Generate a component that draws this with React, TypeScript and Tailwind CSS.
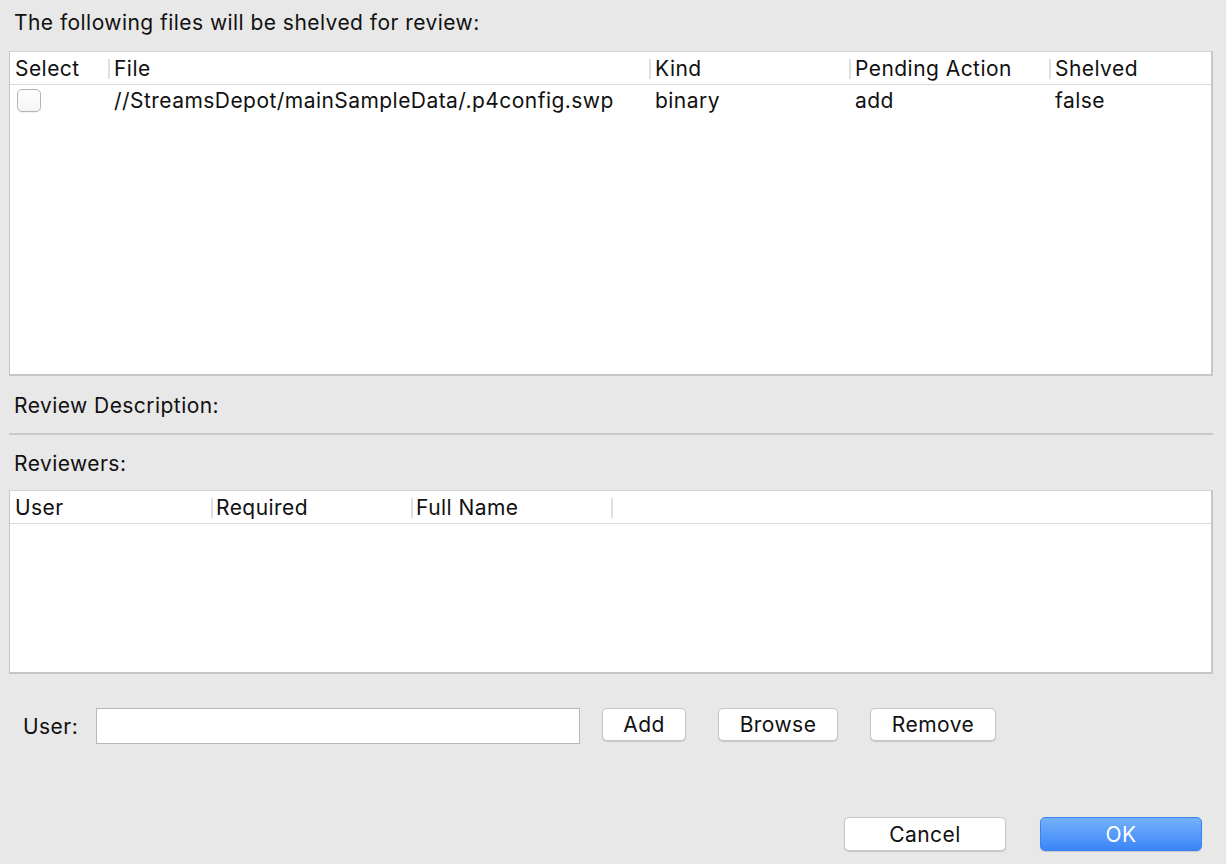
import React from "react";

const font = { fontFamily: 'Inter, "Liberation Sans", Arial, sans-serif' };

function Sep() {
  return <span className="absolute left-0 top-[7px] h-[20px] w-[2px] bg-[#e0e0e0]" />;
}

export default function App() {
  return (
    <div
      className="w-[1226px] h-[864px] bg-[#e8e8e8] text-[21px] tracking-[0.45px] text-[#111] overflow-hidden flex flex-col"
      style={font}
    >
      <div className="pl-[14px] pt-[10px] h-[51px] leading-[26px]">
        The following files will be shelved for review:
      </div>

      {/* Files table */}
      <div className="ml-[9px] w-[1204px] h-[325px] bg-white border-l border-t border-r-2 border-b-2 border-[#c6c6c6] border-t-[#d4d4d4] flex flex-col">
        <div className="h-[33px] flex items-center border-b border-[#dadada] leading-none">
          <div className="relative w-[98px] pl-[5px]">Select</div>
          <div className="relative w-[541px] pl-[6px] h-full flex items-center">
            <Sep />
            File
          </div>
          <div className="relative w-[200px] pl-[6px] h-full flex items-center">
            <Sep />
            Kind
          </div>
          <div className="relative w-[200px] pl-[6px] h-full flex items-center">
            <Sep />
            Pending Action
          </div>
          <div className="relative flex-1 pl-[6px] h-full flex items-center">
            <Sep />
            Shelved
          </div>
        </div>
        <div className="h-[30px] flex items-center leading-none">
          <div className="w-[98px] pl-[7px] flex items-center">
            <span className="block w-[24px] h-[23px] rounded-[5px] border border-[#b3b3b3] bg-gradient-to-b from-white to-[#f4f4f4] shadow-[0_1px_0_rgba(0,0,0,0.05)]" />
          </div>
          <div className="w-[541px] pl-[6px]">//StreamsDepot/mainSampleData/.p4config.swp</div>
          <div className="w-[200px] pl-[6px]">binary</div>
          <div className="w-[200px] pl-[6px]">add</div>
          <div className="flex-1 pl-[6px]">false</div>
        </div>
      </div>

      <div className="pl-[14px] pt-[18px] h-[57px] leading-[24px]">Review Description:</div>
      <div className="ml-[9px] w-[1204px] h-[2px] bg-[#c8c8c8]" />
      <div className="pl-[14px] pt-[17px] h-[55px] leading-[24px]">Reviewers:</div>

      {/* Reviewers table */}
      <div className="ml-[9px] w-[1204px] h-[184px] bg-white border-l border-t border-r-2 border-b-2 border-[#c6c6c6] border-t-[#d4d4d4] flex flex-col">
        <div className="h-[33px] flex items-center border-b border-[#dadada] leading-none">
          <div className="relative w-[201px] pl-[5px]">User</div>
          <div className="relative w-[200px] pl-[5px] h-full flex items-center">
            <Sep />
            Required
          </div>
          <div className="relative w-[200px] pl-[5px] h-full flex items-center">
            <Sep />
            Full Name
          </div>
          <div className="relative flex-1 h-full">
            <Sep />
          </div>
        </div>
      </div>

      {/* User entry row */}
      <div className="mt-[34px] h-[36px] flex items-center">
        <span className="ml-[23px] w-[73px] pt-[2px]">User:</span>
        <div className="w-[484px] h-[36px] bg-white border border-[#b8b8b8]" />
        <button className="ml-[22px] w-[84px] h-[33px] bg-white rounded-[5px] border border-[#c6c6c6] shadow-[0_1px_1px_rgba(0,0,0,0.15)] leading-none -mt-[3px]">
          Add
        </button>
        <button className="ml-[32px] w-[120px] h-[33px] bg-white rounded-[5px] border border-[#c6c6c6] shadow-[0_1px_1px_rgba(0,0,0,0.15)] leading-none -mt-[3px]">
          Browse
        </button>
        <button className="ml-[32px] w-[126px] h-[33px] bg-white rounded-[5px] border border-[#c6c6c6] shadow-[0_1px_1px_rgba(0,0,0,0.15)] leading-none -mt-[3px]">
          Remove
        </button>
      </div>

      {/* Bottom buttons */}
      <div className="mt-[73px] flex">
        <button className="ml-[844px] w-[162px] h-[34px] bg-white rounded-[5px] border border-[#c6c6c6] shadow-[0_1px_1px_rgba(0,0,0,0.15)] leading-none">
          Cancel
        </button>
        <button className="ml-[34px] w-[162px] h-[34px] rounded-[5px] border border-[#3a82f0] bg-gradient-to-b from-[#74b0fa] to-[#3a85f7] text-white leading-none shadow-[0_1px_1px_rgba(0,0,0,0.15)]">
          OK
        </button>
      </div>
    </div>
  );
}
